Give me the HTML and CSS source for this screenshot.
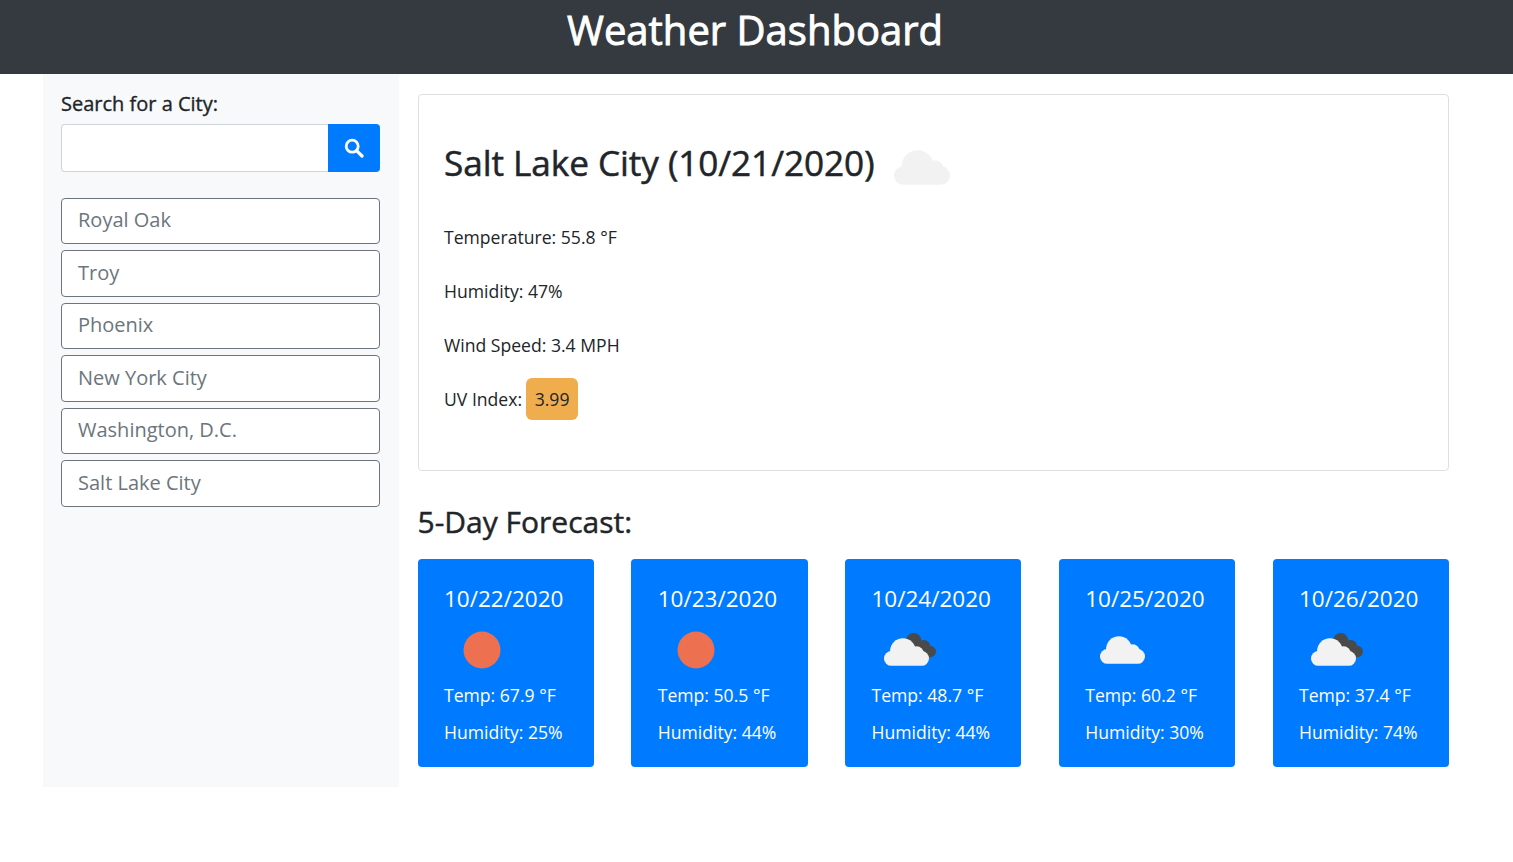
FILE: index.html
```html
<!DOCTYPE html>
<html lang="en">
<head>
    <meta charset="UTF-8">
    <meta name="viewport" content="width=device-width, initial-scale=1.0">
    <title>Weather Dashboard</title>
    <link rel="stylesheet" href="styles.css">
</head>
<body>
    <svg class="icon-defs" width="0" height="0" aria-hidden="true">
        <symbol id="cloud" viewBox="0 0 133 82">
            <circle cx="56" cy="38" r="38"/>
            <circle cx="96" cy="46" r="22"/>
            <rect x="0" y="38" width="133" height="44" rx="22"/>
        </symbol>
        <symbol id="cloud-back" viewBox="0 0 76 50">
            <circle cx="41.7" cy="15.7" r="7.6"/>
            <circle cx="52" cy="21" r="6"/>
            <circle cx="58.2" cy="26.5" r="5.8"/>
            <path d="M36 14L52 16L58 21L58 32H44z"/>
        </symbol>
    </svg>

    <header class="page-header">
        <h1>Weather Dashboard</h1>
    </header>

    <div class="layout">
        <aside class="sidebar">
            <label class="search-label" for="city">Search for a City:</label>
            <div class="search-group">
                <input class="search-input" type="text" id="city">
                <button class="search-btn" type="button" aria-label="Search">
                    <svg viewBox="0 0 20 20" width="20" height="20">
                        <circle cx="8.2" cy="8.2" r="6" fill="none" stroke="#fff" stroke-width="2.8"/>
                        <path d="M12.6 12.6L18 18" stroke="#fff" stroke-width="3.2" stroke-linecap="round"/>
                    </svg>
                </button>
            </div>
            <div class="city-list">
                <button class="city-btn" type="button">Royal Oak</button>
                <button class="city-btn" type="button">Troy</button>
                <button class="city-btn" type="button">Phoenix</button>
                <button class="city-btn" type="button">New York City</button>
                <button class="city-btn" type="button">Washington, D.C.</button>
                <button class="city-btn" type="button">Salt Lake City</button>
            </div>
        </aside>

        <main class="content">
            <section class="current">
                <h2 class="current-title">Salt Lake City (10/21/2020)
                    <svg class="current-icon"><use href="#cloud"/></svg>
                </h2>
                <p>Temperature: 55.8 °F</p>
                <p>Humidity: 47%</p>
                <p>Wind Speed: 3.4 MPH</p>
                <p>UV Index: <span class="uv-badge">3.99</span></p>
            </section>

            <h3 class="forecast-title">5-Day Forecast:</h3>
            <div class="forecast">
                <div class="day-card">
                    <h5>10/22/2020</h5>
                    <svg class="day-icon" viewBox="0 0 76 50"><circle cx="38" cy="25" r="18.5" fill="#ed7050"/></svg>
                    <p>Temp: 67.9 °F</p>
                    <p>Humidity: 25%</p>
                </div>
                <div class="day-card">
                    <h5>10/23/2020</h5>
                    <svg class="day-icon" viewBox="0 0 76 50"><circle cx="38" cy="25" r="18.5" fill="#ed7050"/></svg>
                    <p>Temp: 50.5 °F</p>
                    <p>Humidity: 44%</p>
                </div>
                <div class="day-card">
                    <h5>10/24/2020</h5>
                    <svg class="day-icon" viewBox="0 0 76 50">
                        <use href="#cloud-back" class="cloud-dark"/>
                        <use href="#cloud" x="12" y="13" width="45" height="28" class="cloud-light"/>
                    </svg>
                    <p>Temp: 48.7 °F</p>
                    <p>Humidity: 44%</p>
                </div>
                <div class="day-card">
                    <h5>10/25/2020</h5>
                    <svg class="day-icon" viewBox="0 0 76 50">
                        <use href="#cloud" x="15" y="11" width="45" height="28" class="cloud-light"/>
                    </svg>
                    <p>Temp: 60.2 °F</p>
                    <p>Humidity: 30%</p>
                </div>
                <div class="day-card">
                    <h5>10/26/2020</h5>
                    <svg class="day-icon" viewBox="0 0 76 50">
                        <use href="#cloud-back" class="cloud-dark"/>
                        <use href="#cloud" x="12" y="13" width="45" height="28" class="cloud-light"/>
                    </svg>
                    <p>Temp: 37.4 °F</p>
                    <p>Humidity: 74%</p>
                </div>
            </div>
        </main>
    </div>
</body>
</html>
```

FILE: styles.css
```css
* {
    box-sizing: border-box;
}
body {
    font-family: "Open Sans", sans-serif;
    font-size: 17.6px;
    line-height: 27px;
    color: #212529;
    margin: 0;
    background-color: #fff;
}
.icon-defs {
    position: absolute;
}
.page-header {
    background-color: #343a40;
    height: 74px;
    padding-right: 3px;
    text-align: center;
}
.page-header h1 {
    margin: 0;
    color: #fff;
    font-size: 40px;
    font-weight: 400;
    line-height: 60px;
    -webkit-text-stroke: 0.9px #fff;
}
.layout {
    display: grid;
    grid-template-columns: 356px 1fr;
    margin: 0 45px 0 43px;
}
.sidebar {
    background-color: #f8f9fa;
    padding: 16px 19px 0 18px;
}
.search-label {
    display: block;
    font-size: 20px;
    font-weight: 400;
    line-height: 27px;
    margin-bottom: 7px;
    -webkit-text-stroke: 0.35px #212529;
}
.search-group {
    display: flex;
    height: 48px;
    margin-bottom: 25.6px;
}
.search-input {
    flex: 1;
    min-width: 0;
    border: 1px solid #ced4da;
    border-right: none;
    border-radius: 4px 0 0 4px;
    background: #fff;
}
.search-btn {
    width: 52px;
    border: none;
    border-radius: 0 4px 4px 0;
    background-color: #007bff;
    display: flex;
    align-items: center;
    justify-content: center;
    padding: 0 0 1px;
}
.city-list {
    display: flex;
    flex-direction: column;
    gap: 6px;
}
.city-btn {
    height: 46.5px;
    padding: 0 16px 2.5px;
    text-align: left;
    font-family: inherit;
    font-size: 20px;
    color: #6c757d;
    background: #fff;
    border: 1px solid #6c757d;
    border-radius: 4px;
}
.content {
    padding: 20px 19.25px 20px 18.5px;
}
.current {
    height: 377px;
    padding: 25px 25px 25px 25.5px;
    border: 1px solid #dfdfdf;
    border-radius: 4px;
}
.current-title {
    display: flex;
    align-items: center;
    margin: 15px 0 35px;
    font-size: 35.2px;
    font-weight: 400;
    line-height: 54px;
    letter-spacing: -0.08px;
    -webkit-text-stroke: 0.5px #212529;
}
.current-icon {
    width: 56px;
    height: 35px;
    margin-left: 19.5px;
    margin-top: 10px;
    fill: #f2f2f2;
    stroke: none;
}
.current p {
    margin: 0 0 27px;
}
.uv-badge {
    display: inline-block;
    padding: 8px 9px 7px;
    margin: -8px 0 -7px -1px;
    background-color: #f0ad4e;
    border-radius: 6px;
}
.forecast-title {
    margin: 33px 0 19px;
    font-size: 30px;
    font-weight: 400;
    line-height: 36px;
    -webkit-text-stroke: 0.45px #212529;
}
.forecast {
    display: grid;
    grid-template-columns: repeat(5, 1fr);
    gap: 37.5px;
}
.day-card {
    height: 208px;
    padding: 25px 25px 25px 26.5px;
    color: #fff;
    background-color: #007bff;
    border-radius: 4px;
}
.day-card h5 {
    margin: 0;
    font-size: 22.5px;
    font-weight: 400;
    line-height: 30px;
}
.day-icon {
    display: block;
    width: 76px;
    height: 50px;
    margin-top: 11px;
    margin-bottom: 7px;
}
.day-card p {
    margin: 0 0 10px;
}
.cloud-light {
    fill: #f2f2f2;
}
.cloud-dark {
    fill: #4a4a4a;
}
```
